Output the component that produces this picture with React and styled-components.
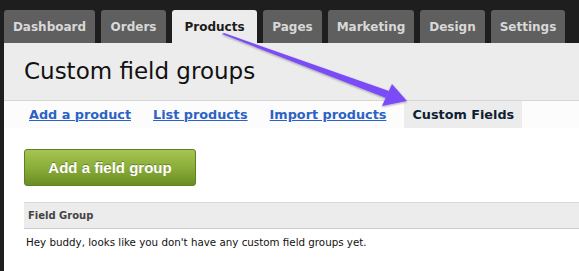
import React from 'react';
import styled, { createGlobalStyle } from 'styled-components';

const GlobalStyle = createGlobalStyle`
  html, body {
    margin: 0;
    padding: 0;
    background: #1e1e1e;
  }
  body {
    font-family: "DejaVu Sans", Verdana, sans-serif;
  }
`;

const Page = styled.div`
  position: relative;
  width: 579px;
  height: 271px;
  overflow: hidden;
  padding-left: 4px;
  box-sizing: border-box;
  display: flex;
  flex-direction: column;
`;

const TabBar = styled.div`
  display: flex;
  gap: 6px;
  padding-top: 10px;
  height: 43px;
  box-sizing: border-box;
`;

const Tab = styled.div`
  display: flex;
  align-items: center;
  justify-content: center;
  width: ${(p) => p.w}px;
  border-radius: 3px 3px 0 0;
  font-size: 12px;
  font-weight: bold;
  background: ${(p) => (p.active ? '#ececec' : '#5f5f5f')};
  color: ${(p) => (p.active ? '#1c1c1c' : '#d8d8d8')};
`;

const Panel = styled.div`
  flex: 1;
  background: #fff;
`;

const Header = styled.div`
  height: 58px;
  box-sizing: border-box;
  background: #ececec;
  border-bottom: 1px solid #d6d6d6;
  padding: 15px 0 0 20px;
`;

const Title = styled.h1`
  margin: 0;
  font-size: 23px;
  font-weight: normal;
  color: #111;
`;

const SubNav = styled.div`
  display: flex;
  gap: 10px;
  height: 27px;
  padding-left: 19px;
  background: #fcfcfc;
`;

const SubItem = styled.a`
  display: flex;
  align-items: center;
  padding: 0 ${(p) => (p.active ? 8 : 6)}px;
  margin-left: ${(p) => (p.active ? 2 : 0)}px;
  font-size: 12.8px;
  font-weight: bold;
  color: ${(p) => (p.active ? '#0f1e33' : '#2b62c7')};
  text-decoration: ${(p) => (p.active ? 'none' : 'underline')};
  background: ${(p) => (p.active ? '#ececec' : 'transparent')};
`;

const Body = styled.div`
  padding: 21px 0 0 20px;
`;

const GreenButton = styled.button`
  width: 172px;
  height: 37px;
  border: 1px solid #5d8120;
  border-radius: 3px;
  background: linear-gradient(#a6c451, #8bad39 50%, #6a8d24);
  color: #fff;
  font-family: "Liberation Sans", Arial, sans-serif;
  font-weight: bold;
  font-size: 15px;
  text-shadow: 0 -1px 0 rgba(0, 0, 0, 0.3);
  cursor: pointer;
`;

const Table = styled.div`
  margin-top: 16px;
`;

const TableHead = styled.div`
  height: 27px;
  box-sizing: border-box;
  display: flex;
  align-items: center;
  padding-left: 4px;
  background: #ececec;
  border-top: 1px solid #d8d8d8;
  border-bottom: 1px solid #cdcdcd;
  font-size: 10px;
  font-weight: bold;
  color: #444;
`;

const TableRow = styled.div`
  padding: 7px 0 0 2px;
  font-size: 10.3px;
  color: #111;
`;

const Arrow = styled.svg`
  position: absolute;
  left: 0;
  top: 0;
  pointer-events: none;
`;

const tabs = [
  ['Dashboard', 91],
  ['Orders', 65],
  ['Products', 85],
  ['Pages', 59],
  ['Marketing', 86],
  ['Design', 65],
  ['Settings', 74],
];
const links = ['Add a product', 'List products', 'Import products'];

export default function App() {
  return (
    <>
      <GlobalStyle />
      <Page>
        <TabBar>
          {tabs.map(([t, w]) => (
            <Tab key={t} w={w} active={t === 'Products'}>{t}</Tab>
          ))}
        </TabBar>
        <Panel>
          <Header>
            <Title>Custom field groups</Title>
          </Header>
          <SubNav>
            {links.map((l) => (
              <SubItem key={l} href="#">{l}</SubItem>
            ))}
            <SubItem active>Custom Fields</SubItem>
          </SubNav>
          <Body>
            <GreenButton>Add a field group</GreenButton>
            <Table>
              <TableHead>Field Group</TableHead>
              <TableRow>Hey buddy, looks like you don't have any custom field groups yet.</TableRow>
            </Table>
          </Body>
        </Panel>
        <Arrow width="579" height="271" viewBox="0 0 579 271">
          <defs>
            <filter id="sh" x="-10%" y="-10%" width="120%" height="120%">
              <feDropShadow dx="0" dy="1" stdDeviation="1" floodColor="#000" floodOpacity="0.35" />
            </filter>
          </defs>
          <g filter="url(#sh)" fill="#7a4cf6">
            <polygon points="222,34 224,33 389,91 386,98" />
            <polygon points="407,101 392,84 382,106" />
          </g>
        </Arrow>
      </Page>
    </>
  );
}
